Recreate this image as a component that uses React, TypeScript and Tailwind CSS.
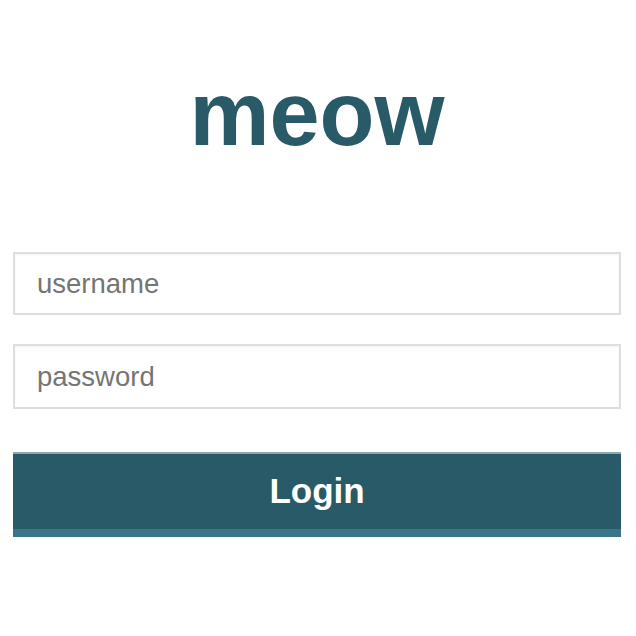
const App = () => {
  return (
    <div
      className="min-h-[636px] bg-white pl-[13px] pr-[15px]"
      style={{ fontFamily: '"Liberation Sans", Arial, sans-serif' }}
    >
      <h1 className="pt-[69px] text-center text-[90px] font-bold leading-none text-[#285a68]">
        meow
      </h1>
      <form className="mt-[93px] flex flex-col" onSubmit={(e) => e.preventDefault()}>
        <input
          type="text"
          placeholder="username"
          className="h-[63px] w-full border-2 border-[#dedede] bg-white px-[22px] text-[27.5px] text-[#555] shadow-[inset_0_1px_2px_rgba(0,0,0,0.05)] outline-none placeholder:text-[#757575]"
        />
        <input
          type="password"
          placeholder="password"
          className="mt-[29px] h-[65px] w-full border-2 border-[#dedede] bg-white px-[22px] text-[27.5px] text-[#555] shadow-[inset_0_1px_2px_rgba(0,0,0,0.05)] outline-none placeholder:text-[#757575]"
        />
        <button
          type="submit"
          className="mt-[43px] h-[85px] w-full border-t-2 border-b-8 border-t-[#8fa9ad] border-b-[#3a7688] bg-[#285a68] text-[35px] font-bold text-white"
        >
          Login
        </button>
      </form>
    </div>
  );
};

export default App;
